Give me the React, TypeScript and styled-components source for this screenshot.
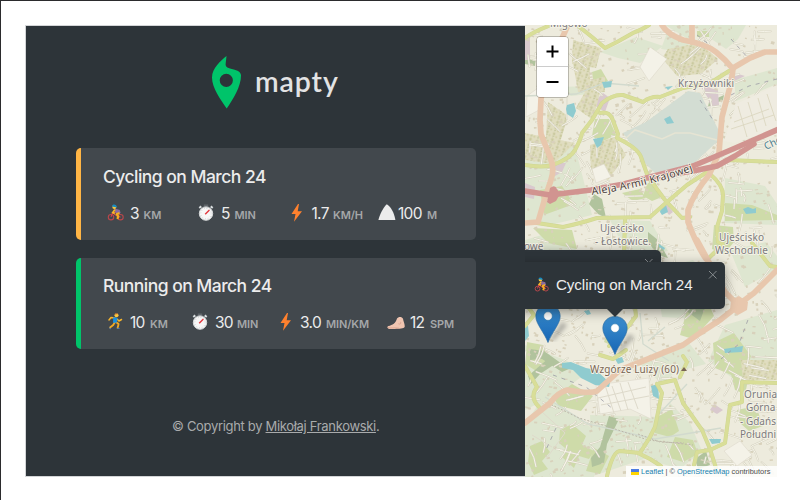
import React from 'react';
import styled, { createGlobalStyle } from 'styled-components';

const GlobalStyle = createGlobalStyle`
  * { box-sizing: border-box; }
  body { margin: 0; background: #fff; overflow: hidden; }
`;

const Page = styled.div`
  width: 800px;
  height: 500px;
  padding: 24px;
  border-top: 1px solid #2b2b2d;
  border-left: 1px solid #2b2b2d;
  background: #fff;
  font-family: Inter, sans-serif;
`;

const Shell = styled.div`
  display: flex;
  width: 752px;
  height: 452px;
`;

const Sidebar = styled.aside`
  display: flex;
  flex-direction: column;
  width: 500px;
  padding: 30px 49px 0 50px;
  border: 1px solid #d3d5d7;
  border-right: 0;
  background: #2d3439;
`;

const Brand = styled.div`
  display: flex;
  height: 53px;
  margin-left: 136px;
`;

const BrandName = styled.span`
  margin: 5px 0 0 13px;
  font: 600 28.5px/40px Lato, sans-serif;
  letter-spacing: 0.9px;
  color: #e2e3e4;
`;

const Cards = styled.div`
  display: flex;
  flex-direction: column;
  gap: 18px;
  margin-top: 39px;
`;

const Card = styled.article<{ $accent: string; $height: number }>`
  height: ${p => p.$height}px;
  padding: ${p => p.$height - 76}px 0 0 22px;
  border-left: 5px solid ${p => p.$accent};
  border-radius: 5px;
  background: #42484d;
`;

const CardTitle = styled.h2`
  margin: 0;
  font-size: 17.5px;
  font-weight: 500;
  line-height: 25px;
  letter-spacing: -0.53px;
  color: #ececec;
  white-space: nowrap;
`;

const Stats = styled.div<{ $tracks: string }>`
  display: grid;
  grid-template-columns: ${p => p.$tracks};
  align-items: baseline;
  height: 22px;
  margin: 14px 0 0 4px;
  line-height: 22px;
  white-space: nowrap;
`;

const Icon = styled.span`
  display: flex;
  align-self: start;
  padding-top: 1px;
`;

const Value = styled.span`
  font-size: 15.5px;
  letter-spacing: -0.7px;
  color: #ececec;
`;

const Unit = styled.span`
  font-size: 11px;
  font-weight: 600;
  letter-spacing: -0.1px;
  color: #a5a7a9;
`;

const Copyright = styled.p`
  margin: 67px 0 0 96px;
  font-size: 13px;
  line-height: 20px;
  letter-spacing: -0.32px;
  color: #a9abac;
  white-space: nowrap;
`;

const AuthorLink = styled.a`
  color: inherit;
  text-decoration: underline;
  text-underline-offset: 1px;
`;

const MapPanel = styled.main`
  position: relative;
  width: 252px;
  height: 452px;
  overflow: hidden;
  background: #ebe8dc;
`;

const ZoomControl = styled.div`
  position: absolute;
  top: 11px;
  left: 11px;
  width: 33px;
  border: 1.5px solid rgba(0, 0, 0, 0.22);
  border-radius: 4px;
  background-clip: padding-box;
`;

const ZoomButton = styled.button`
  display: flex;
  align-items: center;
  justify-content: center;
  width: 100%;
  height: 30px;
  padding: 0;
  border: 0;
  border-bottom: 1px solid #ccc;
  border-radius: 3px 3px 0 0;
  background: #fff;
  &:last-child { border-bottom: 0; border-radius: 0 0 3px 3px; }
`;

const Popup = styled.div<{ $x: number; $y: number }>`
  position: absolute;
  left: ${p => p.$x}px;
  top: ${p => p.$y}px;
  display: flex;
  align-items: center;
  gap: 7px;
  width: 219.5px;
  height: 47px;
  padding: 0 0 2px 29px;
  border-radius: 5px;
  background: #2d3439;
  box-shadow: 0 3px 12px rgba(0, 0, 0, 0.4);
  color: #ececec;
  font: 15.2px "Liberation Sans", sans-serif;
  letter-spacing: -0.1px;
  white-space: nowrap;
`;

const PopupTip = styled.svg`
  position: absolute;
  top: 46px;
  left: 101px;
`;

const CloseMark = styled.svg`
  position: absolute;
  top: 8px;
  right: 7px;
`;

const MarkerPin = styled.svg<{ $x: number; $y: number }>`
  position: absolute;
  left: ${p => p.$x}px;
  top: ${p => p.$y}px;
  overflow: visible;
`;

const Attribution = styled.div`
  position: absolute;
  right: 0;
  bottom: 0;
  display: flex;
  align-items: center;
  width: 151px;
  height: 11px;
  padding-left: 5px;
  background: rgba(255, 255, 255, 0.82);
  color: #4c4c4c;
  font: 7.45px/11px "Liberation Sans", sans-serif;
  white-space: pre;
`;

const Flag = styled.svg`
  margin-right: 2px;
`;

const MapLink = styled.a`
  color: #1681b0;
`;

const Cyclist = ({ size = 17 }: { size?: number }) => (
  <svg width={size} height={size} viewBox="0 0 17 17" fill="none">
    <circle cx="4" cy="13.2" r="2.7" stroke="#b9474c" strokeWidth="1.1" />
    <circle cx="13.5" cy="13.2" r="2.7" stroke="#b9474c" strokeWidth="1.1" />
    <path d="M4 13 5.5 8.8l5 3.8 3 .4M5.5 9l6-1" stroke="#e43d4a" strokeWidth="1" />
    <path d="M8 4.5 12.8 6l.8 3-3.2 1.2L8 8z" fill="#8b6c9c" />
    <path d="M8 5.5 5.8 8.5l2 .8" stroke="#f9b52a" strokeWidth="1.8" />
    <path d="m12.5 9-3 1.2 1.8 2.3-1 2.5" stroke="#f6ae20" strokeWidth="2.1" strokeLinejoin="round" />
    <circle cx="7.3" cy="3" r="2" fill="#ffc83d" />
    <path d="M5 2.5C5.5-.3 9.6 0 9.9 3.4z" fill="#168bc3" />
  </svg>
);

const Runner = () => (
  <svg width="17" height="17" viewBox="0 0 17 17" fill="none" strokeLinecap="round" strokeLinejoin="round">
    <path d="m8 5-4-.5L2 7M10 6l2 2 2.5-1.5" stroke="#f7b52c" strokeWidth="1.5" />
    <path d="m8 9-1.8 3L3 14.5M9 9l2.6 2-1 4" stroke="#f2aa24" strokeWidth="1.8" />
    <path d="m6.2 4.3 4.3.5-.8 5H6z" fill="#168fe0" />
    <circle cx="9.5" cy="2.3" r="2" fill="#ffc83d" />
    <path d="M7.5 1.6C7.9 0 10.2-.5 11.1 1z" fill="#aa6437" />
    <path d="m2.4 15 1.3.8M10.4 15.4h1.8" stroke="#527cb3" strokeWidth="1" />
  </svg>
);

const Stopwatch = () => (
  <svg width="17" height="18" viewBox="0 0 17 18" fill="none">
    <path d="M5.8.5h4.4v2.7H5.8z" fill="#60666b" />
    <path d="m1.3 4 2-1.6M14.7 4l-2-1.6" stroke="#d8dddf" strokeWidth="2" />
    <circle cx="8" cy="9.6" r="6.7" fill="#f7f7f7" stroke="#d5d8d9" />
    <circle cx="8" cy="9.6" r="5.2" stroke="#c6c9cb" strokeDasharray=".7 2.02" />
    <path d="m7.2 10.3 4.2-4.2" stroke="#e2363d" strokeWidth="1.4" />
  </svg>
);

const Bolt = () => (
  <svg width="13" height="18" viewBox="0 0 13 18">
    <path d="M8 0 1.5 10h4L4 17.7 12 7.3H7.7L9 0z" fill="#ff812e" />
  </svg>
);

const Mountain = () => (
  <svg width="18" height="17" viewBox="0 0 18 17">
    <path d="M8.8.2C12.4 2.4 16.1 8 17.4 16H.4C1.6 10.7 5.3 3.1 8.8.2z" fill="#ececec" />
  </svg>
);

const Foot = () => (
  <svg width="20" height="18" viewBox="0 0 20 18">
    <path d="M10 5.5C11 3.7 14.8 3 16 5.8c.5 3.1 2.2 6 1.6 8.3-.8 2.4-11.6 1.8-15.2 1.8C.3 15.7-.3 13.7 1.4 13c4.1-.8 7.4-3 8.6-7.5z" fill="#f0c5b1" />
    <path d="M.6 14.4c3 1.3 7-.1 11.4.8M11.4 10.8c2.3 1.2 2.8-1 2-2" fill="none" stroke="#d6a08c" strokeWidth=".8" />
  </svg>
);

const LogoPin = () => (
  <svg width="30" height="53" viewBox="0 0 30 53">
    <path fillRule="evenodd" fill="#00c46a" d="M14.5 0C9 4.5 0 12 0 21.5 0 32 8.5 43.5 14.7 52.5 21 43.5 29 30.5 29 19.5c0-3-2.8-5.2-7.2-6.1-5.6-1.1-8.8-2.1-8.1-6.2C14 4.8 14.3 2 14.5 0zm-.2 17.7a6.6 6.6 0 1 0 0 13.2 6.6 6.6 0 0 0 0-13.2z" />
  </svg>
);

const BlueMarker = ({ x, y }: { x: number; y: number }) => (
  <MarkerPin $x={x} $y={y} width="26" height="39" viewBox="0 0 27 41">
    <defs>
      <linearGradient id="pinFill" x1="0" y1="0" x2="0" y2="1">
        <stop stopColor="#3c8fcf" /><stop offset="1" stopColor="#1766b5" />
      </linearGradient>
      <filter id="soft"><feGaussianBlur stdDeviation="2.1" /></filter>
    </defs>
    <path d="m15 38 13-19 6 3-14 16z" fill="#555" opacity=".4" filter="url(#soft)" />
    <path d="M13.5.5C6 .5.7 6 .7 13c0 8 9 17 12.8 27.5C17.3 30 26.3 21 26.3 13 26.3 6 21 .5 13.5.5z" fill="url(#pinFill)" stroke="#286da6" strokeWidth=".7" />
    <circle cx="13.5" cy="12.7" r="4.5" fill="#fff" stroke="#397eae" strokeWidth=".6" />
  </MarkerPin>
);

const Close = () => (
  <CloseMark width="10" height="10" viewBox="0 0 10 10">
    <path d="m1 1 7.5 7.5M8.5 1 1 8.5" stroke="#858a8d" strokeWidth="1" />
  </CloseMark>
);

let seed = 71;
const rnd = () => {
  seed = (seed * 16807) % 2147483647;
  return seed / 2147483647;
};

const lanes = Array.from({ length: 400 }, () => {
  const x = 525 + rnd() * 252;
  const y = 25 + rnd() * 452;
  const angle = Math.sin(x / 45) + Math.cos(y / 60) + (rnd() > 0.5 ? Math.PI / 2 : 0);
  const len = 6 + rnd() * 17;
  return `M${x.toFixed(1)} ${y.toFixed(1)}q${(Math.cos(angle) * len * 0.5 + rnd() * 3).toFixed(1)} ${(Math.sin(angle) * len * 0.5).toFixed(1)} ${(Math.cos(angle) * len).toFixed(1)} ${(Math.sin(angle) * len).toFixed(1)}`;
});

const houses = Array.from({ length: 1100 }, () => {
  const x = 525 + rnd() * 252;
  const y = 25 + rnd() * 452;
  const w = 1 + rnd() * 2.5;
  const h = 1 + rnd() * 1.8;
  const skew = Math.sin(x / 40 + y / 50);
  return `M${x.toFixed(1)} ${y.toFixed(1)}l${w.toFixed(1)} ${skew.toFixed(1)} ${(-skew).toFixed(1)} ${h.toFixed(1)} ${(-w).toFixed(1)} ${(-skew).toFixed(1)}z`;
}).join('');

const paleGreens = [
  'M525 137 575 147 586 190 592 215 550 225 525 220z', 'M553 87 600 86 605 92 571 96z',
  'M692 25h54l-8 14-12 10-29-20z', 'M734 80l43-12v16l-41 17z', 'M725 178l40 8 12 18v21l-53-2z',
  'M525 240l30-9 22 17-17 20-35 4z', 'M545 395l54 38-5 44h-69v-53z',
  'M525 345l40 15 23 12-27 20-36 18z', 'M725 325l52-15v50l-33 26-36-25z',
  'M590 415l74 2-11 39-60 20z', 'M670 403l20 20 12 28-22 18-31-9z', 'M610 220l40 1 18 30-39 7z',
  'M667 33l25 8-10 11-21-3z', 'M665 25h28v17z', 'M600 52l36-15 27 9-23 17-22-5z',
  'M655 270l38-10 23 27-16 32-38-2z', 'M638 362l50-20 18 22-31 8-13 12z', 'M730 250l36-8 11 14v13l-32 18z',
];

const greens = [
  'M595 119l14 0 7 16-15 7-9-6z', 'M592 72l9-3 7 12-14 6z', 'M697 31h12v6h-12z', 'M647 184l7-5 8 18-10 4-9-5z',
  'M540 190l22-4 12 18-30 11z', 'M533 228l39 2 5 19-29-6z', 'M725 203l27 2 25 10v5l-52 1z',
  'M688 307l21-3 5 12-21 23-13-4z', 'M572 384l21 12-12 15-22-5-6-8z', 'M530 446l12-5 8 11-8 9 6 8-14 6-6-13z',
  'M560 430l12-6 14 12-4 9 12 6-5 8-10-3-5 12-12-11 3-9-6-5z', 'M655 418l17-9 7 22-9 6-15-4z',
  'M713 343l21-10 17 23-8 24-28-12z', 'M730 370l19 6-4 18-10-4z', 'M594 448l15 8-9 18-14-3z',
  'M737 410l19-4 7 20-14 5-9-8z', 'M608 331l14 9-5 8-13-6z', 'M622 193l18-4 6 9-13 3z', 'M714 225l19 2 1 15-10 12-12-5z',
  'M525 260l20-7 9 12-8 18-21-5z', 'M527 342l16 3 7 20-12 7-13-8z', 'M675 437l18 3 5 14-15 8-16-5z',
];

const woods = [
  'M594 194l8 5 4 19-8-4-9-10z', 'M609 416l10 3-12 25-3 19-12 4-1-9 9-11z', 'M530 349l14 2 25 18-7 3-20-13-12 1z',
  'M699 294l18-1-13 17-4 11-15-11z', 'M654 117l12-4 10 7-9 5-14-1z', 'M648 232l10 8 10 18-11-3-9-14z',
  'M695 459l11-8 4 14-12 4z', 'M709 102l15-7-1 5-15 7z', 'M525 58l11 3-1 5-10-2z', 'M528 376l22-19 5 7-15 10-9 10z',
];

const waters = [
  'M602 82l10-1-1 6-7 1z', 'M567 105l7-2 2 8-3 7-6-4-1-5z', 'M593 139l11-2-3 8-4 3z', 'M665 87l8-1-5 4z',
  'M664 119l6-3 4 7-7 1z', 'M661 206l5-1 2 7-6 3-2-3z', 'M743 209l5-2 5 2 3-1v5l-10 1z', 'M525 323l3 3 1 10-4 5z',
  'M562 363l9-1 15 6 10 2 14 13-1 4-14-2-14-7-8-8-11-2z', 'M651 386l7-2 1 15-6-3z', 'M615 359l7-2 2 5-6 2z',
  'M709 439l12 0-1 4-8 1z', 'M724 349l19-3-1 6-17 1z', 'M584 311l5-1 2 4-4 1z', 'M659 244l6 4-1 2-5-3z',
];

const yellowRoads = [
  'M525 38Q533 32 551 25', 'M577 25 592 37 605 48 617 42 633 33Q643 29 649 25', 'M525 165Q542 168 553 165Q571 158 575 150Q581 139 582 133L592 120 602 103Q613 94 623 95L643 102Q651 96 660 97L683 88 710 83 729 71',
  'M600 113Q608 111 612 118L618 134 617 138Q638 148 641 157L648 177 665 200 682 218 690 217', 'M537 223 563 227Q578 224 597 218L650 217 667 202 687 185 707 172 727 160 777 162',
  'M710 174Q723 185 723 195L722 211 717 227 718 242 723 244 710 257', 'M625 220l-1 33',
  'M525 366Q531 376 537 387Q529 397 539 407', 'M635 307 636 316Q621 337 609 346', 'M657 384 675 380 683 403 702 430 710 449 716 468',
  'M657 384 662 393 655 427 650 437 640 453 620 451Q613 451 607 476', 'M638 453 650 459 661 466', 'M694 465 697 452 710 450 725 443 730 405 742 402 742 382 777 383',
  'M752 243l18 23 7 1', 'M600 355l13 4 13-9', 'M525 303l9 12-9 11', 'M680 377l7-15-4-6',
];

const orangeRoads = [
  'M525 223 538 222 545 198 551 180Q555 168 550 157L541 134 540 120 541 99Q545 78 553 58L568 25',
  'M662 25Q667 34 683 40Q706 44 716 52Q725 59 733 69L731 83 722 117 720 140 719 153 709 175Q694 193 688 210L688 222Q697 246 706 259',
  'M697 240 725 292 738 305 754 293 777 270', 'M738 306 720 320 700 333 683 345Q665 352 648 359L620 370 597 391Q591 394 567 390Q557 393 550 403L525 423', 'M692 25v17', 'M733 68 750 58 765 52 777 52',
];

const allotments = 'M573 63h17v18l15-5v16h-27zM573 40l28 8-5 20-24-4zM585 92l17-7-9 35-17-12zM548 102l20 14-12 40-10-20zM590 145l25-8 11 18-18 25-17-8zM525 133l50 10-22 21-28-4zM668 49l31-6 19 16-17 15-24 2-15-18zM741 360h36v20h-34z';

const Roads = ({ paths, color, width }: { paths: string[]; color: string; width: number }) => (
  <g fill="none" stroke={color} strokeWidth={width} strokeLinecap="round" strokeLinejoin="round">
    {paths.map(d => <path key={d} d={d} />)}
  </g>
);

const CityMap = () => (
  <svg width="252" height="452" viewBox="525 25 252 452">
    <defs>
      <pattern id="garden" width="7" height="6" patternUnits="userSpaceOnUse" patternTransform="rotate(17)">
        <circle cx="2" cy="2" r="1.4" fill="#cbcaa0" /><circle cx="5" cy="4.5" r="1.1" fill="#d3d0a5" /><path d="m1 5 2-1" stroke="#c0c398" />
      </pattern>
      <path id="aleja" d="M592 195Q648 187 695 170" />
    </defs>
    <rect x="525" y="25" width="252" height="452" fill="#edebdd" />
    {paleGreens.map(d => <path key={d} d={d} fill="#dee6d0" />)}
    {greens.map(d => <path key={d} d={d} fill="#cedba9" />)}
    {woods.map(d => <path key={d} d={d} fill="#b1c39d" />)}
    <g fill="#d9c9ce">
      <path d="m603 93 7 5-5 14-13-8zM703 80l7 8 8 2 1 15-8 3-3-10-7-11zM555 163l11 0-4 9-7 4zM525 183l10 4-1 12-9-2zM611 396l6 3-2 4-5-2zM666 203l7 9-4 3-6-8zM725 80l10-7 10 3-15 7z" />
      <path d="M525 35h5v25h-5zM714 404l9 6-6 4-7-4z" />
    </g>
    <path d={allotments} fill="#e0ddc0" />
    <path d={allotments} fill="url(#garden)" />
    <path d={houses} fill="#d8d1bb" />
    <Roads paths={lanes} color="#d4d1bf" width={1.9} />
    <Roads paths={lanes} color="#f6f4e9" width={1} />
    <path d="M623 133 646 122 688 91 700 93 720 133 720 139 692 165 655 173 640 158 626 137z" fill="#d3ddd3" />
    <path d="m625 139 10-9 27 9 13-6 15 0 27 7" fill="none" stroke="#e6e4d3" strokeWidth="1.6" />
    <path d="m736 104 41-19v43l-42 15-11-2z" fill="#efece1" />
    <path d="m738 106 9 31m1-35 9 30m1-34 8 28m1-32 9 27m-42 1 35-13m-38 20 43-14" fill="none" stroke="#d9d4bd" strokeWidth=".8" />
    {['M650 47l17 12-18 22-9-14z', 'M527 96l11-8 1 22-13 7z', 'M596 385l53-7 2 41-21-10-30 5z', 'M724 451l16-10 12 14-15 11z', 'M592 169l12-5 7 13-15 6z'].map(d => <path key={d} d={d} fill="#f4f2e8" stroke="#ddd9cb" strokeWidth=".6" />)}
    <path d="m605 385 9 28m-2-27 9 25m-1-28 8 27m0-28 10 27m-40-11 48-11m-45 18 48-9M541 411l24 22-19 26m-14-24 20 12" fill="none" stroke="#dedacb" />
    <path d="m525 96 51-2 28-11 35 3m-94 311 43 27 67 15 66-11m-62-14 28-30m-47-71 3 31 26 17m-21-20 17-14" fill="none" stroke="#d2dace" strokeWidth="1.3" />
    {waters.map(d => <path key={d} d={d} fill="#8fcbcf" />)}
    <path d="m731 95 18-9 28-7M700 100l13 20m-16-85 14 11M731 39l18 20 16-9m-212 325 33 12 27 22m-57 19-11 24m176-93 18-15 10-27" fill="none" stroke="#9b9aa5" strokeWidth=".8" strokeDasharray="4 5" />
    <path d="m548 403 31 15 27 8 42 14 45 5m-55-11 22 8 24 1" fill="none" stroke="#bcb6a8" strokeWidth="1" strokeDasharray="1.8 1.8" />
    <Roads paths={yellowRoads} color="#ced694" width={4} />
    <Roads paths={yellowRoads} color="#d9de98" width={3.1} />
    <Roads paths={orangeRoads} color="#e8c7ad" width={5.7} />
    <path d="m731 300 8-4 9 6-1 8-9 5-8-5z" fill="#e8c7ad" />
    <Roads paths={['M525 191 550 195 591 190 624 184 654 176 693 166 733 149 779 129', 'M652 177 693 171 717 166 735 156 754 144']} color="#d19490" width={5.6} />
    <path d="M550 188q5-4 7 1l3 5-4 7-6 3-3-2z" fill="#d19490" />
    <g fontFamily="Noto Sans" fontSize="10" fill="#7c7a7d" stroke="#f4f2e6" strokeWidth="1.8" paintOrder="stroke" strokeLinejoin="round">
      <text x="550" y="27">Migowo</text>
      <text x="678" y="87" textLength="56">Krzyżowniki</text>
      <text x="600" y="232" textLength="44">Ujeścisko</text>
      <text x="595" y="245" textLength="56">- Łostowice.</text>
      <text x="719" y="241" textLength="45">Ujeścisko</text>
      <text x="715" y="254" textLength="53">Wschodnie</text>
      <text x="524" y="250">owe</text>
      <text x="590" y="373" fill="#786453" textLength="89">Wzgórze Luizy (60)</text>
      <text x="744" y="398" textLength="33">Orunia</text>
      <text x="746" y="411">Górna</text>
      <text x="740" y="425" textLength="36">- Gdańs</text>
      <text x="740" y="438" textLength="36">Południ</text>
      <text x="766" y="150" fill="#4c7e91" transform="rotate(-26 766 150)">Che</text>
      <text fontSize="10.5" fill="#4d4040"><textPath href="#aleja" textLength="104">Aleja Armii Krajowej</textPath></text>
    </g>
    <path d="m681 371 3-4 3 4z" fill="#786453" />
  </svg>
);

export default function App() {
  return (
    <>
      <GlobalStyle />
      <Page>
        <Shell>
          <Sidebar>
            <Brand><LogoPin /><BrandName>mapty</BrandName></Brand>
            <Cards>
              <Card $accent="#ffb545" $height={92}>
                <CardTitle>Cycling on March 24</CardTitle>
                <Stats $tracks="23px 13.5px 54.5px 23px 13.5px 55.5px 21.5px 21.5px 45px 20px 29px auto">
                  <Icon><Cyclist /></Icon><Value>3</Value><Unit>KM</Unit>
                  <Icon><Stopwatch /></Icon><Value>5</Value><Unit>MIN</Unit>
                  <Icon><Bolt /></Icon><Value>1.7</Value><Unit>KM/H</Unit>
                  <Icon><Mountain /></Icon><Value>100</Value><Unit>M</Unit>
                </Stats>
              </Card>
              <Card $accent="#00c46a" $height={91}>
                <CardTitle>Running on March 24</CardTitle>
                <Stats $tracks="23px 20px 42px 23px 22px 42px 21px 26px 61px 23px 20px auto">
                  <Icon><Runner /></Icon><Value>10</Value><Unit>KM</Unit>
                  <Icon><Stopwatch /></Icon><Value>30</Value><Unit>MIN</Unit>
                  <Icon><Bolt /></Icon><Value>3.0</Value><Unit>MIN/KM</Unit>
                  <Icon><Foot /></Icon><Value>12</Value><Unit>SPM</Unit>
                </Stats>
              </Card>
            </Cards>
            <Copyright>© Copyright by <AuthorLink>Mikołaj Frankowski</AuthorLink>.</Copyright>
          </Sidebar>
          <MapPanel>
            <CityMap />
            <BlueMarker x={10} y={279} />
            <BlueMarker x={77} y={291} />
            <Popup $x={-84} $y={225}><Close /></Popup>
            <Popup $x={-20} $y={237}>
              <Cyclist size={15} />
              Cycling on March 24
              <Close />
              <PopupTip width="18" height="10" viewBox="0 0 18 10"><path d="M0 0h18L9 9z" fill="#2d3439" /></PopupTip>
            </Popup>
            <ZoomControl>
              <ZoomButton aria-label="Zoom in"><svg width="13" height="13" viewBox="0 0 13 13"><path d="M6.5.5v12M.5 6.5h12" stroke="#000" strokeWidth="2" /></svg></ZoomButton>
              <ZoomButton aria-label="Zoom out"><svg width="13" height="13" viewBox="0 0 13 13"><path d="M.5 6h12" stroke="#000" strokeWidth="2" /></svg></ZoomButton>
            </ZoomControl>
            <Attribution>
              <Flag width="8" height="6" viewBox="0 0 8 6"><path d="M0 0h8v3H0z" fill="#4c7be1" /><path d="M0 3h8v3H0z" fill="#ffd500" /></Flag>
              <MapLink>Leaflet</MapLink> | © <MapLink>OpenStreetMap</MapLink> contributors
            </Attribution>
          </MapPanel>
        </Shell>
      </Page>
    </>
  );
}
